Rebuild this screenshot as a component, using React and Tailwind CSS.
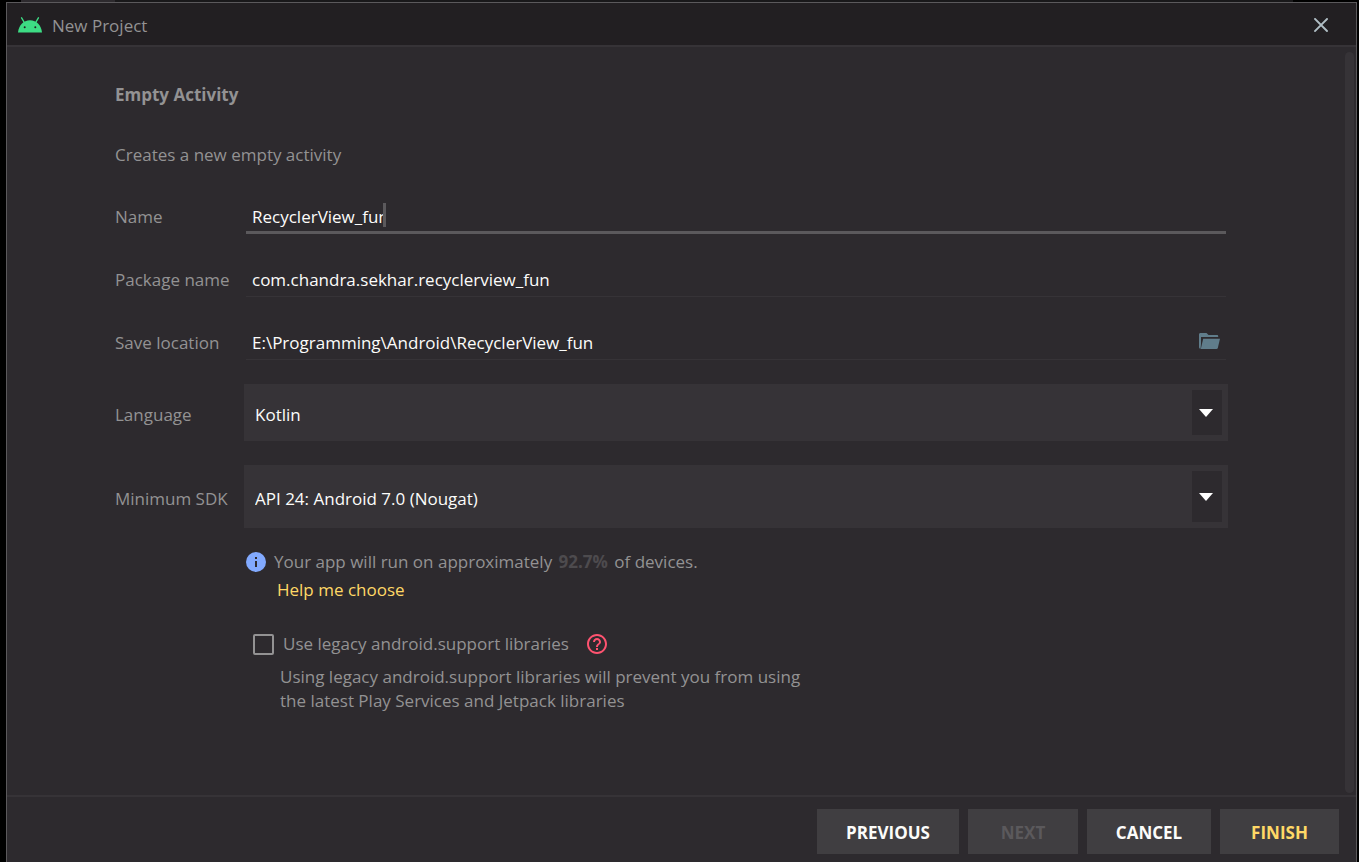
import React, { useState } from "react";

const fieldText = "text-[17px] leading-6 text-[#fcfcfa]";

function AndroidIcon() {
  return (
    <svg width="24" height="16" viewBox="0 0 24 16" aria-hidden="true">
      <path d="M3.6 0.8 6.6 6M20.4 0.8 17.4 6" stroke="#3ddc84" strokeWidth="1.4" strokeLinecap="round" />
      <path d="M0 15.5C.6 8.400 5.400 3.200 12 3.200S23.400 8.400 24 15.500Z" fill="#3ddc84" />
      <circle cx="6.700" cy="10.300" r="1" fill="#221f22" />
      <circle cx="17.300" cy="10.300" r="1" fill="#221f22" />
    </svg>
  );
}

function FolderIcon() {
  return (
    <svg width="22" height="17" viewBox="0 0 22 17" aria-hidden="true">
      <path
        d="M0 1.500C0 .600.600 0 1.500 0H7.500L9.500 2H18C18.700 2 19.200 2.500 19.200 3.200V4H2V11L1.600 15.800C.700 15.800 0 15.200 0 14.300Z"
        fill="#607d8b"
      />
      <path d="M4.200 5.800H21L18.800 15C18.600 15.700 18.200 16 17.500 16H1.800Z" fill="#607d8b" />
    </svg>
  );
}

function TextField({ id, label, value, focused, children }) {
  const [text, setText] = useState(value);
  return (
    <div className="flex h-[63px] items-start">
      <label htmlFor={id} className="w-[131px] shrink-0 pt-1 text-[17px] leading-6">
        {label}
      </label>
      <div
        className={
          focused
            ? "relative mr-px flex h-[33px] flex-1 items-start border-b-3 border-[#5b595c] pt-1 pl-[6px]"
            : "relative mr-px flex h-[33px] flex-1 items-start border-b border-[#363337] pt-1 pl-[6px]"
        }
      >
        <input
          id={id}
          value={text}
          onChange={(e) => setText(e.target.value)}
          className={`min-w-0 flex-1 bg-transparent outline-none ${fieldText}`}
        />
        {focused && (
          <span className="absolute top-[2px] left-[137px] h-6 w-[6px] border-r-3 border-[#2d2a2e] bg-[#5b595c]" />
        )}
        {children}
      </div>
    </div>
  );
}

function SelectField({ id, label, options, tall }) {
  return (
    <div className="flex items-center">
      <label htmlFor={id} className="w-[129px] shrink-0 pt-1 text-[17px] leading-6">
        {label}
      </label>
      <div className={`relative -mr-px flex flex-1 bg-[#363337] ${tall ? "h-[63px]" : "h-[57px]"}`}>
        <select id={id} className={`w-full appearance-none bg-transparent pt-1 pl-[11px] outline-none ${fieldText}`}>
          {options.map((o) => (
            <option key={o}>{o}</option>
          ))}
        </select>
        <span className="pointer-events-none absolute inset-y-[6px] right-[6px] flex w-[30px] items-center justify-center bg-[#2d2a2e] pr-[2px]">
          <svg width="14" height="8" viewBox="0 0 14 8" aria-hidden="true">
            <path d="M0 0H14L7 8Z" fill="#fff" />
          </svg>
        </span>
      </div>
    </div>
  );
}

function FooterButton({ className, ...rest }) {
  return (
    <button type="button" className={`h-[45px] bg-[#403e41] pt-[2px] text-[17px] font-bold ${className}`} {...rest} />
  );
}

export default function App() {
  return (
    <div className="flex min-h-screen flex-col bg-black pr-[2px] pl-[6px] font-['Open_Sans','Noto_Sans',sans-serif] text-[#939293]">
      <div className="mr-[64px] ml-[15px] flex h-[2px] bg-[#19181a]">
        <div className="w-[94px] bg-[#2d2a2e]" />
      </div>
      <div className="flex flex-1 flex-col border-x border-t border-[#5b595c] bg-[#2d2a2e]">
        <header className="flex h-11 items-center border-b-2 border-[#363337] bg-[#221f22] pt-[2px] pr-[28px] pl-[11px]">
          <AndroidIcon />
          <h1 className="ml-[10px] flex-1 pt-[2px] text-[17px] leading-6">New Project</h1>
          <button type="button" aria-label="Close" className="p-0">
            <svg width="14" height="14" viewBox="0 0 14 14" aria-hidden="true">
              <path d="M1 1 13 13M13 1 1 13" stroke="#b0bec5" strokeWidth="1.900" strokeLinecap="square" />
            </svg>
          </button>
        </header>

        <main className="flex flex-1 pt-[5px] pr-[2px] pb-[2px] pl-[108px]">
          <div className="flex-1 pt-[31px] pr-[118px]">
            <h2 className="text-[17px] leading-6 font-bold">Empty Activity</h2>
            <p className="mt-9 text-[17px] leading-6">Creates a new empty activity</p>

            <form className="mt-[34px]">
              <TextField id="name" label="Name" value="RecyclerView_fun" focused />
              <TextField id="package" label="Package name" value="com.chandra.sekhar.recyclerview_fun" />
              <TextField id="location" label="Save location" value={"E:\\Programming\\Android\\RecyclerView_fun"}>
                <button type="button" aria-label="Browse" className="mt-[2px] mr-[5px]">
                  <FolderIcon />
                </button>
              </TextField>

              <div className="-mt-[6px] flex flex-col gap-6">
                <SelectField id="language" label="Language" options={["Kotlin", "Java"]} />
                <SelectField id="sdk" label="Minimum SDK" options={["API 24: Android 7.0 (Nougat)"]} tall />
              </div>

              <div className="mt-[22px] ml-[131px] text-[17px] leading-6">
                <div className="flex items-center gap-2">
                  <svg width="20" height="20" viewBox="0 0 20 20" aria-hidden="true">
                    <circle cx="10" cy="10" r="10" fill="#82aaff" />
                    <path d="M9 5H11V7H9ZM9 9H11V15H9Z" fill="#2d2a2e" />
                  </svg>
                  <p>
                    Your app will run on approximately <b className="mx-[2px] text-[#4d4b4e]">92.7%</b> of devices.
                  </p>
                </div>
                <a href="#help" className="mt-1 ml-[31px] inline-block text-[#ffd866]">
                  Help me choose
                </a>

                <div className="mt-[30px] ml-[7px] flex items-center">
                  <input
                    id="legacy"
                    type="checkbox"
                    className="size-[21px] appearance-none rounded-xs border-2 border-[#939293]"
                  />
                  <label htmlFor="legacy" className="ml-[9px]">
                    Use legacy android.support libraries
                  </label>
                  <button type="button" aria-label="Help" className="ml-[18px]">
                    <svg width="20" height="20" viewBox="0 0 24 24" fill="#ff5370" aria-hidden="true">
                      <path d="M10.800 19.200h2.400v-2.400h-2.400v2.400zm1.200-19.200C5.380 0 0 5.380 0 12s5.380 12 12 12 12-5.380 12-12S18.620 0 12 0zm0 21.600C6.700 21.600 2.400 17.300 2.400 12S6.700 2.400 12 2.400s9.600 4.300 9.600 9.600-4.300 9.600-9.600 9.600zm0-16.800C9.350 4.800 7.200 6.950 7.200 9.600h2.400c0-1.320 1.080-2.400 2.400-2.400s2.400 1.080 2.400 2.400c0 2.400-3.600 2.100-3.600 6h2.400c0-2.700 3.600-3 3.600-6 0-2.650-2.150-4.800-4.800-4.800z" />
                    </svg>
                  </button>
                </div>
                <p className="mt-[9px] ml-[34px]">
                  Using legacy android.support libraries will prevent you from using
                  <br />
                  the latest Play Services and Jetpack libraries
                </p>
              </div>
            </form>
          </div>
          <div className="w-[9px] rounded-full bg-[#363337]" />
        </main>

        <footer className="flex justify-end gap-[9px] border-t-2 border-[#363337] pt-3 pr-[17px] pb-2">
          <FooterButton className="w-[142px] text-[#fcfcfa]">PREVIOUS</FooterButton>
          <FooterButton className="w-[110px] text-[#5b595c]" disabled>
            NEXT
          </FooterButton>
          <FooterButton className="w-[124px] text-[#fcfcfa]">CANCEL</FooterButton>
          <FooterButton className="w-[119px] text-[#ffd866]">FINISH</FooterButton>
        </footer>
      </div>
    </div>
  );
}
